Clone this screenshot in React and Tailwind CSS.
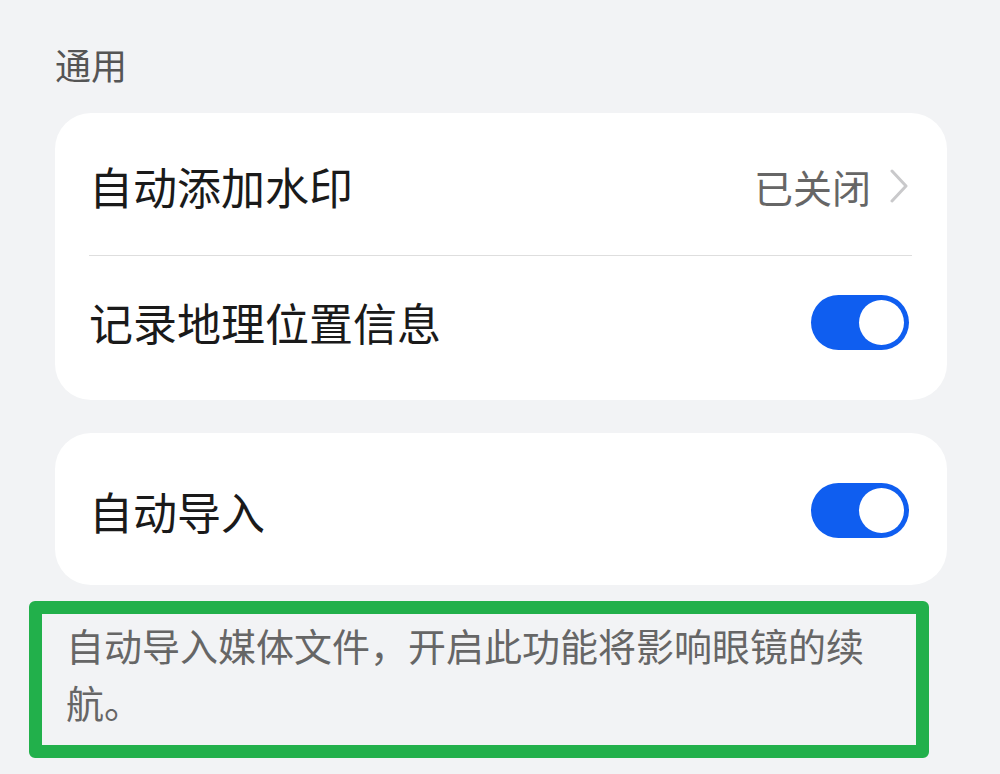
import { useState } from 'react';

function Toggle({ on, onChange }) {
  return (
    <button
      onClick={() => onChange(!on)}
      className={`w-[98px] h-[55px] rounded-full p-[5px] flex items-center ${on ? 'bg-[#0f5ef0] justify-end' : 'bg-[#d9d9dc] justify-start'}`}
    >
      <span className="block w-[45px] h-[45px] rounded-full bg-white" />
    </button>
  );
}

function Chevron() {
  return (
    <svg width="20" height="34" viewBox="0 0 20 34" fill="none">
      <path d="M3 2 L17 17 L3 32" stroke="#c9c9cb" strokeWidth="3" strokeLinecap="round" strokeLinejoin="round" />
    </svg>
  );
}

export default function App() {
  const [geo, setGeo] = useState(true);
  const [autoImport, setAutoImport] = useState(true);

  return (
    <div
      className="w-[1000px] h-[774px] bg-[#f2f3f5] pt-[42px] pl-[55px] pr-[53px] overflow-hidden"
      style={{ fontFamily: '"Noto Sans CJK SC", "Noto Sans", sans-serif' }}
    >
      <div className="text-[36px] leading-[44px] text-[#555]">通用</div>

      <div className="mt-[27px] bg-white rounded-[36px] pl-[34px] pr-[38px] pb-[12px]">
        <div className="h-[142px] pt-[4px] flex items-center justify-between">
          <span className="text-[44px] text-[#1a1a1a]">自动添加水印</span>
          <div className="flex items-center gap-[18px]">
            <span className="text-[39px] text-[#666]">已关闭</span>
            <Chevron />
          </div>
        </div>
        <div className="h-px bg-[#dedede] mr-[-3px]" />
        <div className="h-[132px] flex items-center justify-between">
          <span className="text-[44px] text-[#1a1a1a]">记录地理位置信息</span>
          <Toggle on={geo} onChange={setGeo} />
        </div>
      </div>

      <div className="mt-[33px] bg-white rounded-[36px] pl-[34px] pr-[38px] pt-[3px] h-[152px] flex items-center justify-between">
        <span className="text-[44px] text-[#1a1a1a]">自动导入</span>
        <Toggle on={autoImport} onChange={setAutoImport} />
      </div>

      <div className="mt-[16px] -ml-[26px] w-[900px] border-[13px] border-[#22b04b] rounded-[6px] pl-[24px] pr-[20px] pt-[2px] pb-[15px]">
        <p className="text-[38px] leading-[57px] text-[#666]">
          自动导入媒体文件，开启此功能将影响眼镜的续航。
        </p>
      </div>
    </div>
  );
}
